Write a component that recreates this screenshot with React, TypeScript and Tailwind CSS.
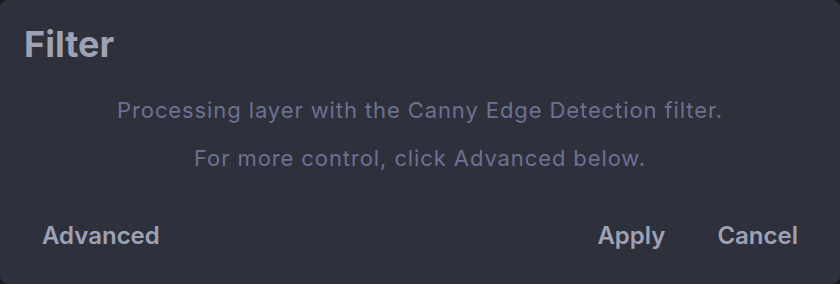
export default function App() {
  return (
    <div className="w-[840px] h-[284px] bg-[#1a1b22]" style={{ fontFamily: "Inter, 'Noto Sans', sans-serif" }}>
      <div className="w-full h-full rounded-lg bg-[#2e303c] flex flex-col px-6 pt-6">
        <h1 className="text-[36px] leading-[40px] font-bold text-[#9ea2b4]">Filter</h1>
        <div className="mt-8 flex flex-col items-center gap-5 text-[22px] leading-[28px] tracking-[0.9px] text-[#6c7291]">
          <p>Processing layer with the Canny Edge Detection filter.</p>
          <p>For more control, click Advanced below.</p>
        </div>
        <div className="mt-[42px] flex items-center justify-between">
          <button className="px-[18px] py-2 text-[24px] leading-[28px] font-semibold text-[#9ea2b4]">Advanced</button>
          <div className="flex items-center gap-4">
            <button className="px-[18px] py-2 text-[24px] leading-[28px] font-semibold text-[#9ea2b4]">Apply</button>
            <button className="px-[18px] py-2 text-[24px] leading-[28px] font-semibold text-[#9ea2b4]">Cancel</button>
          </div>
        </div>
      </div>
    </div>
  );
}
